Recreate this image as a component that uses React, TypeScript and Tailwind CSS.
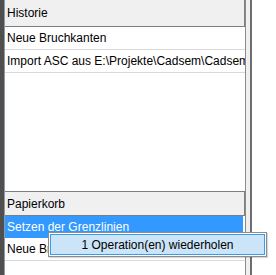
export default function App() {
  const font = { fontFamily: '"Segoe UI", "Liberation Sans", Arial, sans-serif' };
  return (
    <div
      className="relative w-[276px] h-[275px] overflow-hidden bg-white flex text-[12px] text-black"
      style={font}
    >
      {/* left frame */}
      <div className="w-[4px] bg-[#4f4f4f]" />
      <div className="w-px bg-[#8d99a6]" />

      {/* panels */}
      <div className="w-[241px] flex flex-col border-r border-[#8a8a8a]">
        {/* Historie */}
        <div className="h-[27px] flex items-center pl-[2px] bg-[#f0f0f0] border-b border-r border-[#7d7d7d]">
          Historie
        </div>
        <div className="h-[23px] flex items-center pl-[2px] border-b border-[#d9d9d9]">
          Neue Bruchkanten
        </div>
        <div className="h-[23px] flex items-center pl-[2px] border-b border-[#d9d9d9] whitespace-nowrap overflow-hidden">
          Import ASC aus E:\Projekte\Cadsem\Cadsem
        </div>
        <div className="h-[118px]" />

        {/* Papierkorb */}
        <div className="h-[25px] flex items-center pl-[2px] bg-[#f0f0f0] border-y border-r border-[#7d7d7d]">
          Papierkorb
        </div>
        <div className="h-[22px] flex items-center pl-[2px] mr-[2px] bg-[#3399ff] text-white">
          Setzen der Grenzlinien
        </div>
        <div className="h-[23px] flex items-center pl-[2px] border-b border-[#d9d9d9]">
          Neue Bruchkanten
        </div>
      </div>

      {/* splitter */}
      <div className="w-[4px] bg-[#f0f0f0]" />
      <div className="w-[2px] bg-[#6e6e6e]" />
      <div className="flex-1 bg-white" />

      {/* context popup */}
      <div className="absolute left-[48px] top-[232px] w-[219px] h-[25px] border border-[#8c8c8c] bg-white p-px shadow-[1px_1px_1px_rgba(0,0,0,0.15)]">
        <div className="h-full flex items-center justify-center bg-[#cce4f7] border border-[#3a9be8] whitespace-nowrap">
          1 Operation(en) wiederholen
        </div>
      </div>
    </div>
  );
}
